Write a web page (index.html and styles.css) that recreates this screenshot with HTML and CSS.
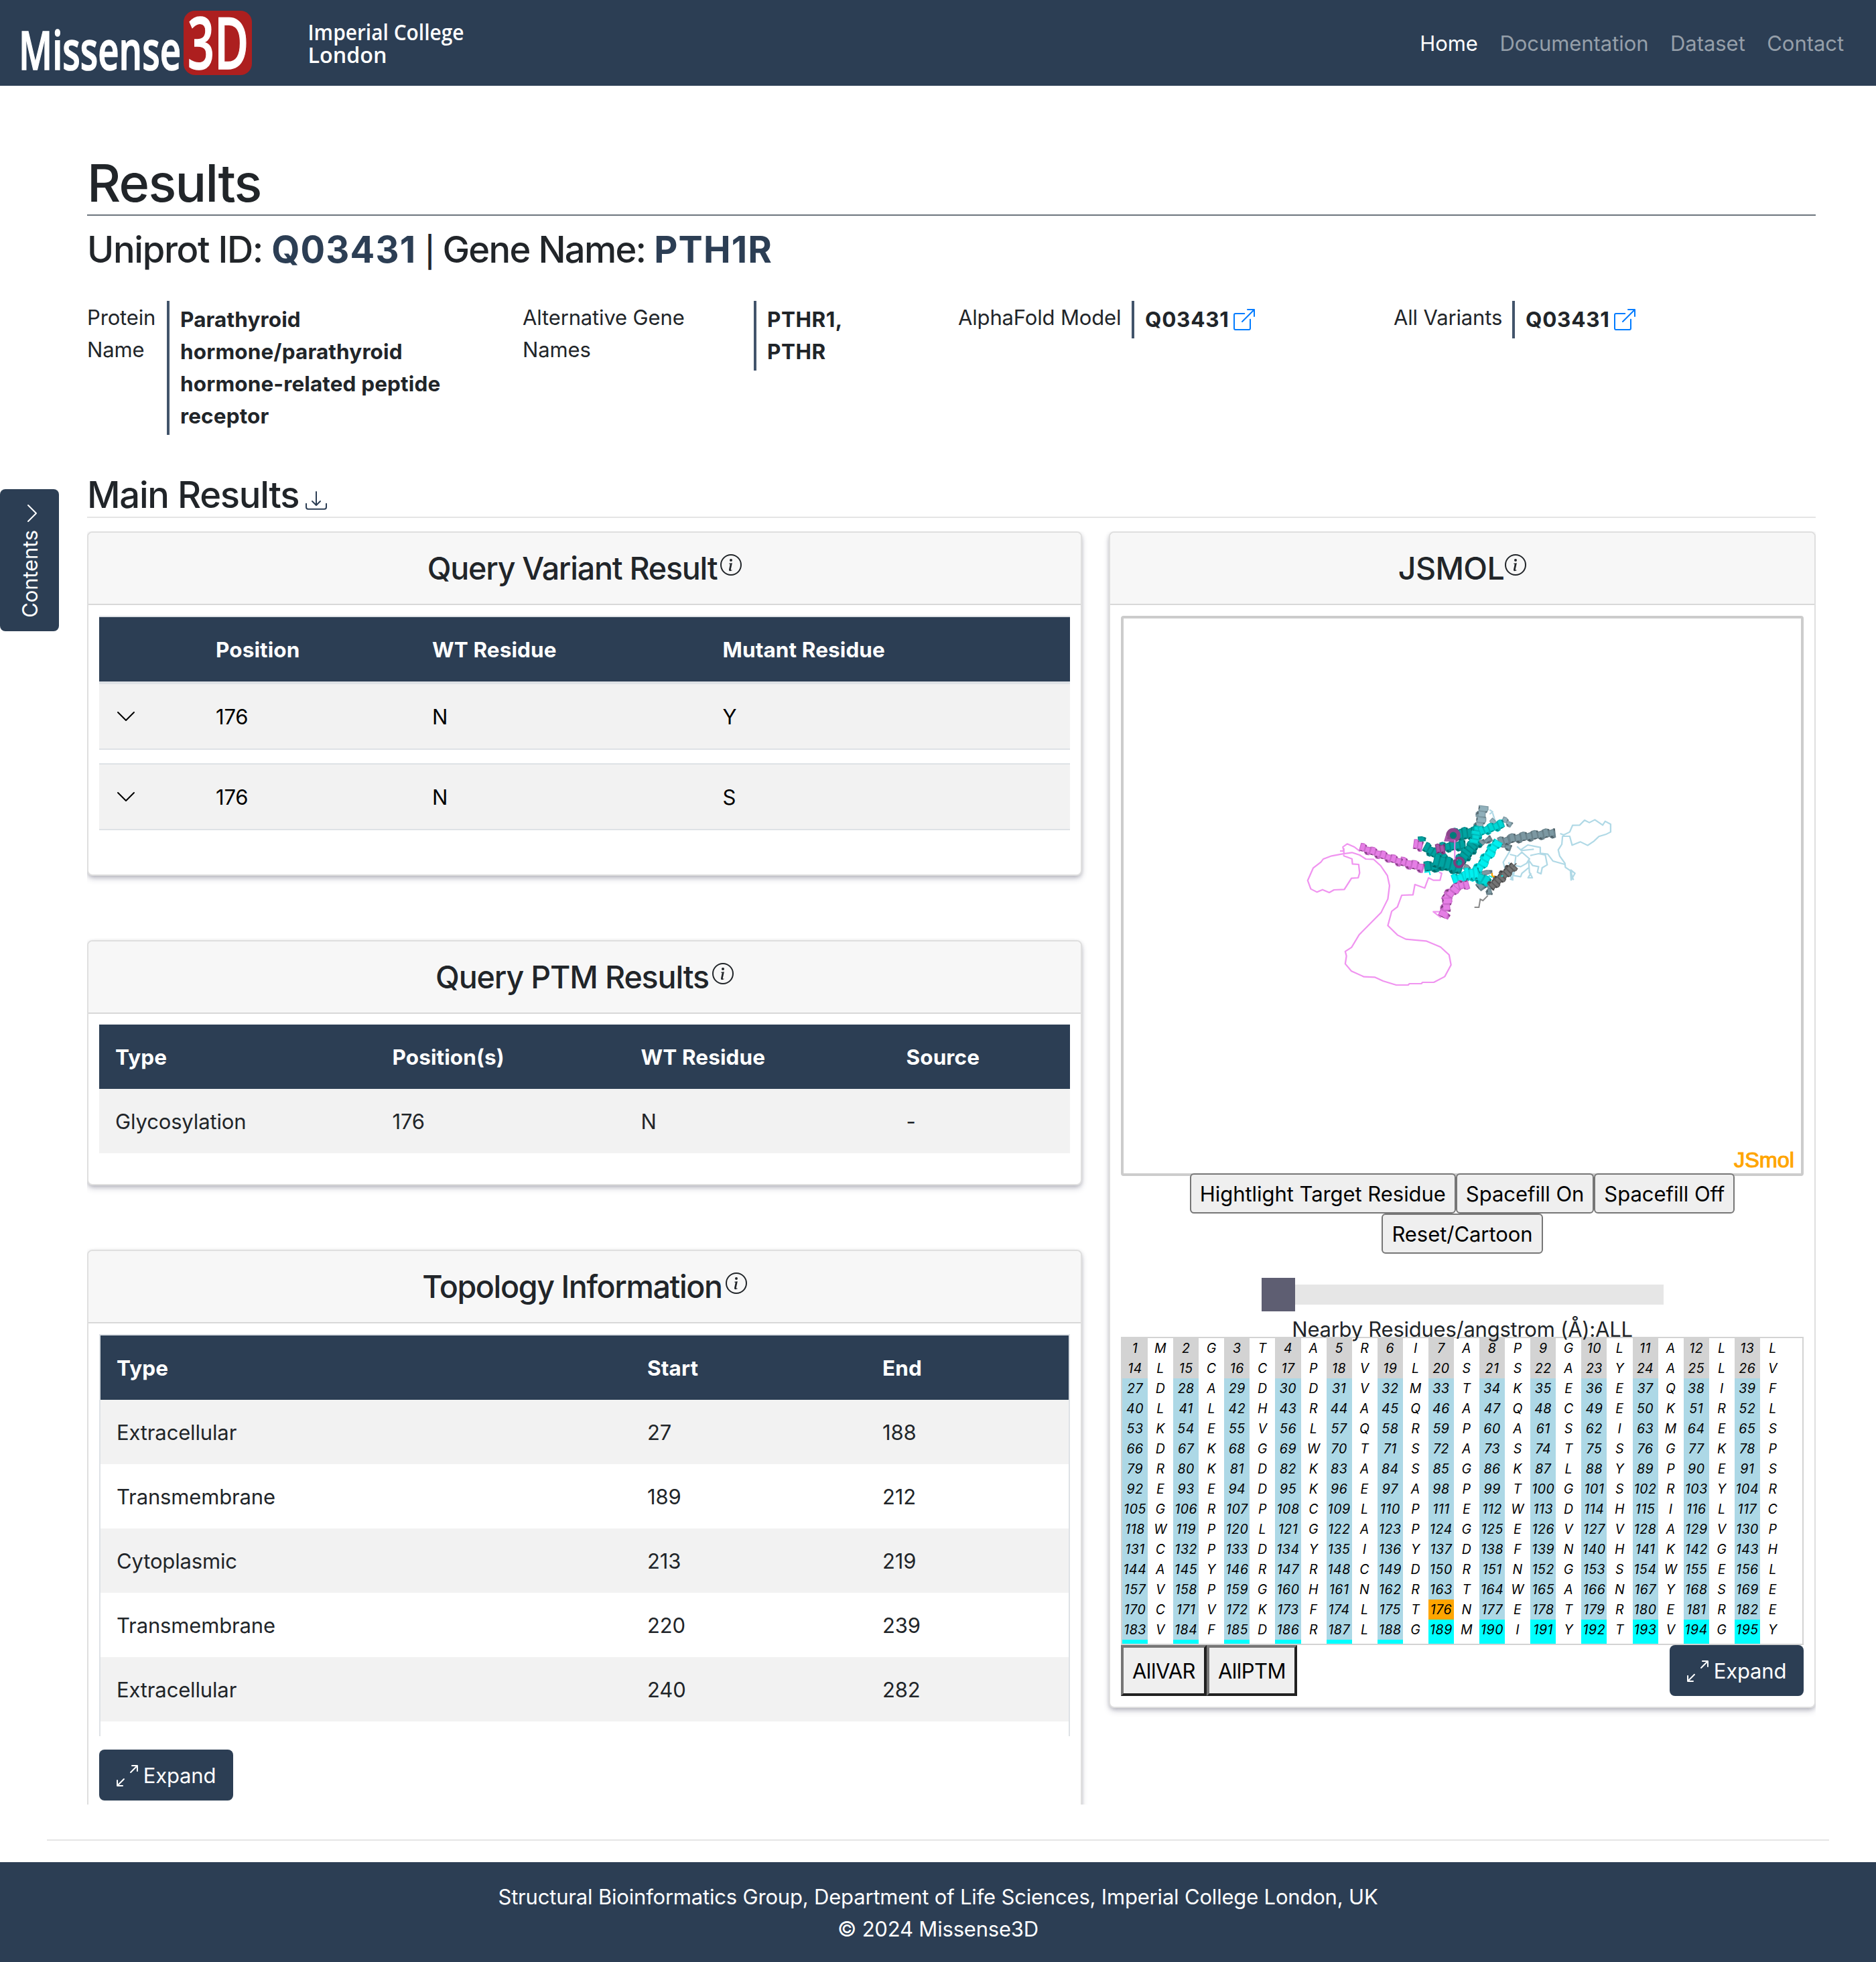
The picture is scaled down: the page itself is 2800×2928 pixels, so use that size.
FILE: index.html
```
<!DOCTYPE html>
<html lang="en">
<head>
<meta charset="utf-8">
<title>Missense3D - Results</title>
<link rel="stylesheet" href="styles.css">
</head>
<body>
<svg class="sprite" aria-hidden="true">
  <symbol id="i-info" viewBox="0 0 16 16"><path d="M8 15A7 7 0 1 1 8 1a7 7 0 0 1 0 14zm0 1A8 8 0 1 0 8 0a8 8 0 0 0 0 16z"/><path d="m8.93 6.588-2.29.287-.082.38.45.083c.294.07.352.176.288.469l-.738 3.468c-.194.897.105 1.319.808 1.319.545 0 1.178-.252 1.465-.598l.088-.416c-.2.176-.492.246-.686.246-.275 0-.375-.193-.304-.533L8.93 6.588zM9 4.5a1 1 0 1 1-2 0 1 1 0 0 1 2 0z"/></symbol>
  <symbol id="i-down" viewBox="0 0 16 16"><path d="M1.646 4.646a.5.5 0 0 1 .708 0L8 10.293l5.646-5.647a.5.5 0 0 1 .708.708l-6 6a.5.5 0 0 1-.708 0l-6-6a.5.5 0 0 1 0-.708z"/></symbol>
  <symbol id="i-right" viewBox="0 0 16 16"><path d="M4.646 1.646a.5.5 0 0 1 .708 0l6 6a.5.5 0 0 1 0 .708l-6 6a.5.5 0 0 1-.708-.708L10.293 8 4.646 2.354a.5.5 0 0 1 0-.708z"/></symbol>
  <symbol id="i-download" viewBox="0 0 16 16"><path d="M.5 9.9a.5.5 0 0 1 .5.5v2.5a1 1 0 0 0 1 1h12a1 1 0 0 0 1-1v-2.5a.5.5 0 0 1 1 0v2.5a2 2 0 0 1-2 2H2a2 2 0 0 1-2-2v-2.5a.5.5 0 0 1 .5-.5z"/><path d="M7.646 11.854a.5.5 0 0 0 .708 0l3-3a.5.5 0 0 0-.708-.708L8.5 10.293V1.5a.5.5 0 0 0-1 0v8.793L5.354 8.146a.5.5 0 1 0-.708.708l3 3z"/></symbol>
  <symbol id="i-link" viewBox="0 0 16 16"><path d="M8.636 3.5a.5.5 0 0 0-.5-.5H1.5A1.5 1.5 0 0 0 0 4.5v10A1.5 1.5 0 0 0 1.5 16h10a1.5 1.5 0 0 0 1.5-1.5V7.864a.5.5 0 0 0-1 0V14.5a.5.5 0 0 1-.5.5h-10a.5.5 0 0 1-.5-.5v-10a.5.5 0 0 1 .5-.5h6.636a.5.5 0 0 0 .5-.5z"/><path d="M16 .5a.5.5 0 0 0-.5-.5h-5a.5.5 0 0 0 0 1h3.793L6.146 9.146a.5.5 0 1 0 .708.708L15 1.707V5.5a.5.5 0 0 0 1 0v-5z"/></symbol>
  <symbol id="i-expand" viewBox="0 0 16 16"><path d="M5.828 10.172a.5.5 0 0 0-.707 0l-4.096 4.096V11.5a.5.5 0 0 0-1 0v3.975a.5.5 0 0 0 .5.5H4.5a.5.5 0 0 0 0-1H1.732l4.096-4.096a.5.5 0 0 0 0-.707zm4.344-4.344a.5.5 0 0 0 .707 0l4.096-4.096V4.5a.5.5 0 1 0 1 0V.525a.5.5 0 0 0-.5-.5H11.5a.5.5 0 0 0 0 1h2.768l-4.096 4.096a.5.5 0 0 0 0 .707z"/></symbol>
</svg>

<header class="navbar">
  <svg class="logo" viewBox="0 0 800 128">
    <rect x="274" y="16" width="102" height="96" rx="17" fill="#ad1f1f"/>
    <text class="logo-text thick" x="28" y="104" font-size="80" textLength="242" lengthAdjust="spacingAndGlyphs">Missense</text>
    <text class="logo-text thick" x="280" y="103" font-size="107" textLength="91" lengthAdjust="spacingAndGlyphs">3D</text>
    <text class="college" x="459.500" y="59.500" font-size="33" textLength="233" lengthAdjust="spacingAndGlyphs">Imperial College</text>
    <text class="college" x="459.500" y="94" font-size="33" textLength="118" lengthAdjust="spacingAndGlyphs">London</text>
  </svg>
  <nav class="links"><a class="active">Home</a><a>Documentation</a><a>Dataset</a><a>Contact</a></nav>
</header>

<aside class="contents-tab"><svg class="icon"><use href="#i-right"/></svg><span>Contents</span></aside>

<main class="page">
  <h1>Results</h1>
  <h2 class="ids">Uniprot ID: <b>Q03431</b><span class="pipe">|</span><span class="gene-label">Gene Name: </span><b>PTH1R</b></h2>

  <section class="facts">
    <div class="fact"><span class="label l1">Protein<br>Name</span><b>Parathyroid<br>hormone/parathyroid<br>hormone-related peptide<br>receptor</b></div>
    <div class="fact"><span class="label l2">Alternative Gene<br>Names</span><b class="alt">PTHR1,<br>PTHR</b></div>
    <div class="fact"><span class="label l3">AlphaFold Model</span><b class="acc">Q03431<svg class="icon blue"><use href="#i-link"/></svg></b></div>
    <div class="fact"><span class="label l4">All Variants</span><b class="acc">Q03431<svg class="icon blue"><use href="#i-link"/></svg></b></div>
  </section>

  <h2 class="main-title">Main Results<svg class="icon"><use href="#i-download"/></svg></h2>

  <div class="columns">
    <div class="left">
      <section class="card">
        <h4><span>Query Variant Result</span><svg class="icon"><use href="#i-info"/></svg></h4>
        <div class="body variants">
          <div class="tr head"><span></span><span>Position</span><span>WT Residue</span><span>Mutant Residue</span></div>
          <div class="tr first"><span><svg class="chev"><use href="#i-down"/></svg></span><span>176</span><span>N</span><span>Y</span></div>
          <div class="tr second"><span><svg class="chev"><use href="#i-down"/></svg></span><span>176</span><span>N</span><span>S</span></div>
        </div>
      </section>
      <section class="card">
        <h4 class="ptm-title"><span>Query PTM Results</span><svg class="icon"><use href="#i-info"/></svg></h4>
        <div class="body ptm">
          <div class="tr head"><span>Type</span><span>Position(s)</span><span>WT Residue</span><span>Source</span></div>
          <div class="tr odd"><span>Glycosylation</span><span>176</span><span>N</span><span>-</span></div>
        </div>
      </section>
      <section class="card topo-card">
        <h4 class="topo-title"><span>Topology Information</span><svg class="icon"><use href="#i-info"/></svg></h4>
        <div class="body">
          <div class="topo">
            <div class="tr head"><span>Type</span><span>Start</span><span>End</span></div>
            <div class="tr odd"><span>Extracellular</span><span>27</span><span>188</span></div>
            <div class="tr"><span>Transmembrane</span><span>189</span><span>212</span></div>
            <div class="tr odd"><span>Cytoplasmic</span><span>213</span><span>219</span></div>
            <div class="tr"><span>Transmembrane</span><span>220</span><span>239</span></div>
            <div class="tr odd"><span>Extracellular</span><span>240</span><span>282</span></div>
          </div>
          <button class="expand"><svg class="icon"><use href="#i-expand"/></svg>Expand</button>
        </div>
      </section>
    </div>

    <section class="card jsmol">
      <h4><span>JSMOL</span><svg class="icon"><use href="#i-info"/></svg></h4>
      <div class="body">
        <div class="viewer">
          <svg class="molecule" viewBox="0 0 1011 828">
            <g id="loops" class="loops" transform="translate(223 237) scale(.35714 .33333)">
              <g stroke="#f094f0">
                <path d="M364 332L340 312L310 298L292 312L296 330L280 330M296 318L296 352L330 365L332 388L358 390L362 428L356 450L328 452L298 502L255 504L235 516L207 503L184 514L158 500L145 462L168 406L200 380L210 366L245 352L290 343L330 337L362 348L388 366L420 367L450 396L478 440L487 485L480 545L452 605L360 705L328 762L302 780L307 800L302 835L328 868L380 893L425 895L460 912L515 930L565 930L570 924L620 924L625 918L672 918L718 892L744 840L736 795L700 760L640 733L555 725L520 706L480 664L496 600L520 580L538 528L585 526L593 480L634 496L650 450L670 461L698 461L705 430L694 425"/>
                <path d="M697 602H670L702 628"/>
              </g>
              <g stroke="#b0d9e6">
                <path d="M1200 252L1215 258L1240 245L1252 215L1282 214L1302 192L1322 203L1345 190L1378 214L1388 197L1411 210V245L1390 256L1362 265L1340 287L1315 305L1285 289L1250 304L1240 264H1210L1207 300L1192 325L1198 352L1220 385L1222 403L1243 418L1246 460L1262 430L1245 415L1250 445L1256 460"/>
                <path d="M1020 310L1035 325L1065 303L1117 314V340L1148 344L1170 375L1220 390"/>
                <path d="M990 330L962 380L970 410L1000 455M1035 328L1090 322M990 345L1015 352L1010 395L1035 400L1060 385L1072 365L1040 335L1020 355M1075 350L1110 342L1138 348L1146 392L1125 405L1120 432L1105 425L1110 400L1085 395L1068 370L1072 430M1010 405L1005 440L1035 445L1040 430L1068 405M1072 425L1084 450H1066L1078 428M985 380L1000 420L1002 460L990 455M905 145L918 155L905 165M918 160L928 195"/>
              </g>
            </g>
            <g id="helices" transform="translate(413 267) scale(.33333)"></g>
            <text class="brand" x="911" y="819" textLength="90" lengthAdjust="spacingAndGlyphs">JSmol</text>
          </svg>
        </div>
        <div class="controls">
          <button>Hightlight Target Residue</button><button>Spacefill On</button><button>Spacefill Off</button>
          <button>Reset/Cartoon</button>
        </div>
        <div class="slider"><i></i></div>
        <p class="nearby">Nearby Residues/angstrom (Å):ALL</p>
        <div class="seq" id="seq"></div>
        <div class="actions"><div class="outset"><button>AllVAR</button><button>AllPTM</button></div><button class="expand"><svg class="icon"><use href="#i-expand"/></svg>Expand</button></div>
      </div>
    </section>
  </div>
</main>
<hr class="rule">
<footer><p>Structural Bioinformatics Group, Department of Life Sciences, Imperial College London, UK</p><p>© 2024 Missense3D</p></footer>
<script src="script.js"></script>
</body>
</html>
```
FILE: script.js
```
// Residue grid: position number followed by its one-letter residue
const rows = ["MGTARIAPGLALL","LCCPVLSSAYALV","DADDVMTKEEQIF","LLHRAQAQCEKRL","KEVLQRPASIMES","DKGWTSASTSGKP","RKDKASGKLYPES","EEDKEAPTGSRYR","GRPCLPEWDHILC","WPLGAPGEVVAVP","CPDYIYDFNHKGH","AYRRCDRNGSWEL","VPGHNRTWANYSE","CVKFLTNETRERE","VFDRLGMIYTVGY"];
let n = 0, html = "";
const kind = i => i === 176 ? "target" : i < 27 ? "signal" : i < 189 ? "outer" : "membrane";
for (const row of rows) {
  for (const aa of row) { n++; html += `<span class="${kind(n)}">${n}</span><span>${aa}</span>`; }
  html += "<span></span>";
}
for (let i = 0; i < 13; i++) html += '<span class="membrane"></span><span></span>';
document.getElementById("seq").innerHTML = html + "<span></span>";

// Cartoon helices: a ribbon of turned segments, each with a lit face and a shaded edge
const palette = {
  violet: ["#e57ee5", "#cc6acc", "#7d3f7d"], plum: ["#a855a8", "#8a448a", "#63306a"],
  cyan: ["#00f0f0", "#00d8d8", "#009595"], aqua: ["#00d8d6", "#00bcbc", "#008a8a"], teal: ["#00a3a1", "#008c8b", "#006968"],
  steel: ["#91b0bb", "#7d99a3", "#56686f"], slate: ["#7c98a2", "#6b838c", "#4b5b62"], gray: ["#747474", "#5a5a5a", "#404040"]
};
// x1, y1, x2, y2, width, segments, colour
const helices = [
  [372, 38, 352, 140, 46, 4, "steel"], [458, 97, 498, 122, 26, 2, "steel"], [405, 100, 425, 125, 24, 1, "steel"],
  [448, 210, 495, 225, 28, 2, "slate"], [350, 380, 372, 410, 42, 1, "slate"], [398, 385, 402, 434, 28, 2, "slate"],
  [440, 200, 510, 184, 40, 3, "slate"], [490, 186, 692, 157, 42, 8, "slate"],
  [350, 215, 405, 180, 28, 2, "slate"], [285, 310, 330, 338, 28, 2, "slate"], [365, 342, 410, 335, 22, 1, "slate"],
  [235, 168, 345, 158, 56, 5, "teal"], [180, 225, 290, 212, 44, 5, "teal"],
  [80, 188, 112, 190, 24, 1, "teal"], [108, 220, 200, 280, 46, 5, "teal"], [108, 312, 200, 305, 48, 3, "teal"], [150, 282, 276, 318, 64, 5, "teal"],
  [268, 285, 345, 195, 56, 6, "teal"], [332, 205, 350, 130, 46, 4, "aqua"],
  [355, 155, 462, 118, 42, 5, "aqua"],
  [438, 195, 330, 350, 46, 7, "cyan"], [235, 372, 330, 345, 50, 4, "cyan"], [320, 335, 395, 385, 48, 3, "aqua"], [290, 345, 350, 340, 56, 3, "cyan"],
  [0, 286, 104, 316, 42, 4, "violet"], [-180, 222, 4, 290, 38, 8, "violet"],
  [60, 210, 98, 218, 46, 2, "violet"], [160, 232, 198, 228, 44, 2, "plum"],
  [306, 388, 240, 402, 42, 3, "violet"], [250, 402, 196, 462, 46, 3, "violet"], [208, 450, 205, 508, 46, 2, "violet"], [175, 515, 216, 538, 32, 1, "violet"],
  [510, 305, 405, 402, 44, 8, "gray"]
];
const f = v => v.toFixed(1);
let art = "";
for (const [x1, y1, x2, y2, w, k, c] of helices) {
  const len = Math.hypot(x2 - x1, y2 - y1), ux = (x2 - x1) / len, uy = (y2 - y1) / len, s = len / k, p = palette[c];
  const pt = (t, o) => `${f(x1 + ux * t - uy * o)},${f(y1 + uy * t + ux * o)}`;
  for (let i = 0; i < k; i++) {
    const a = i * s, h = w / 2, j = i % 2 ? 5 : -3;
    art += `<polygon fill="${p[1]}" points="${pt(a - 3, -h + 3 + j)} ${pt(a + s * .5, -h + j)} ${pt(a + s + 3, -h + 2)} ${pt(a + s + 2, h - 3 + j)} ${pt(a + s * .4, h + j)} ${pt(a, h - 3)}"/>`;
    art += `<polygon fill="${p[0]}" points="${pt(a + 2, -h + 6 + j)} ${pt(a + s * .75, -h + 3 + j)} ${pt(a + s * .85, h * .5)} ${pt(a + 3, h * .7)}"/>`;
    art += `<polygon fill="${p[2]}" points="${pt(a + s * .75, -h + 1)} ${pt(a + s + 3, -h + 5)} ${pt(a + s + 1, -h * .2)}"/>`;
    art += `<polygon fill="${p[2]}" points="${pt(a + 1, h - 3)} ${pt(a + s * .8, h - 1 + j)} ${pt(a + s * .4, h * .55)}"/>`;
  }
}
// End-on helices appear as rings
art += '<circle cx="237" cy="170" r="24" fill="#007c7a" stroke="#8c458c" stroke-width="17"/><path d="M208 172L202 192H240" fill="none" stroke="#a855a8" stroke-width="10"/><circle cx="263" cy="291" r="20" fill="none" stroke="#7d3f7d" stroke-width="12"/><path d="M244 190V278" stroke="#e67ee6" stroke-width="6"/>';
art += '<path d="M392 440L370 462L358 456L352 492H332" fill="none" stroke="#8a8a8a" stroke-width="6"/>';
art += '<path d="M411 338V354H422" fill="none" stroke="orange" stroke-width="7"/><path d="M396 350L412 358M452 352H460M108 335L130 332L134 348" fill="none" stroke="#0ee" stroke-width="6"/>';
art += '<path d="M505 310L520 295M500 330L514 326" stroke="#5e5e5e" stroke-width="5"/>';
document.getElementById("helices").innerHTML = art;
```
FILE: styles.css
```
* { box-sizing: border-box; }
body { margin: 0; background: #fff; color: #212529; font: 400 31px/48px Inter, "Liberation Sans", sans-serif; letter-spacing: -.15px; height: 2928px; overflow: hidden; display: flex; flex-direction: column; position: relative; }
h1, h2, h4, p { margin: 0; font-weight: 500; }
p { font-weight: 400; }
b { font-weight: 700; }
button { font: inherit; letter-spacing: inherit; margin: 0; }
.sprite { position: absolute; width: 0; height: 0; }
.icon { width: 32px; height: 32px; fill: currentColor; flex: none; }
.blue { color: #007bff; }

.navbar { height: 128px; flex: none; background: #2c3e54; display: flex; justify-content: space-between; align-items: center; padding-right: 48px; }
.logo { width: 800px; height: 128px; }
.logo-text { font-family: "Open Sans", sans-serif; font-weight: 600; fill: #fff; letter-spacing: 0; }
.thick { stroke: #fff; stroke-width: 1.6; }
.college { font-family: "Open Sans", sans-serif; font-weight: 600; fill: #fff; letter-spacing: 0; }
.links { display: flex; gap: 32.5px; color: #959fa9; letter-spacing: -.05px; padding-top: 2px; }
.links .active { color: #fff; }

.contents-tab { position: absolute; left: 0; top: 730px; width: 88px; height: 212px; background: #2c3e54; color: #fff; border-radius: 8px; display: flex; flex-direction: column; align-items: center; padding: 20px 0 0 8px; gap: 9px; }
.contents-tab span { writing-mode: vertical-rl; transform: rotate(180deg); margin-right: 6px; }

.page { padding: 98px 90px 0 130px; flex: none; height: 2565px; }
h1 { font-size: 77.6px; line-height: 94px; letter-spacing: -1.7px; border-bottom: 2px solid #6c757d; }
h2 { font-size: 54.3px; line-height: 67px; letter-spacing: -1.2px; }
.ids { margin-top: 17px; white-space: pre; letter-spacing: -1.3px; height: 67px; }
.ids b { color: #2c3e54; letter-spacing: 1.2px; }
.pipe { font-size: 45px; display: inline-block; width: 39px; text-align: center; line-height: 60px; }
.gene-label { letter-spacing: -1.7px; }
.facts { margin-top: 43px; display: grid; grid-template-columns: repeat(4, 650px); height: 200px; align-items: start; }
.fact { display: flex; align-items: flex-start; }
.label { flex: none; padding-top: 1px; }
.l1 { width: 119px; } .l2 { width: 345px; } .l3 { width: 259px; } .l4 { width: 177px; }
.fact b { border-left: 4px solid #42546b; padding: 4px 0 4px 16px; font-size: 31.5px; letter-spacing: .13px; }
.fact .alt { letter-spacing: .5px; }
.fact .acc { display: flex; align-items: center; letter-spacing: .7px; gap: 7px; height: 56px; }
.main-title { margin-top: 55px; display: flex; gap: 10px; border-bottom: 2px solid #e5e5e5; height: 69px; line-height: 69px; letter-spacing: -1.25px; }
.main-title .icon { color: #2c3e54; margin-top: 27px; }

.columns { margin-top: 20px; height: 1900px; overflow: hidden; display: grid; grid-template-columns: 1485px 1055px; gap: 40px; align-items: start; }
.left { display: flex; flex-direction: column; gap: 96px; }
.card { border: 2px solid #dfdfdf; border-radius: 8px; background: #fff; box-shadow: 0 5px 10px -1px rgba(50, 50, 93, .25), 0 2px 6px -1px rgba(0, 0, 0, .2); }
.card h4 { height: 108px; background: #f7f7f7; border-bottom: 2px solid #d8d8d8; border-radius: 6px 6px 0 0; display: flex; justify-content: center; align-items: center; font-size: 46.6px; letter-spacing: -1.25px; gap: 5px; }
.card h4.ptm-title { letter-spacing: -1.15px; }
.card h4.topo-title { letter-spacing: -1.4px; }
.card h4 .icon { margin-bottom: 11px; }
.body { padding: 16px; }
.tr { display: grid; height: 96px; align-items: center; padding-top: 1px; }
.tr span { padding-left: 24px; }
.head { background: #2c3e54; color: #fff; font-weight: 700; font-size: 31.5px; letter-spacing: .1px; }
.odd { background: #f2f2f2; }
.variants { padding-bottom: 66px; }
.variants .tr { grid-template-columns: 150px 323px 433.5px 1fr; }
.variants .head { height: 102px; border-top: 2px solid #dee2e6; border-bottom: 4px solid #dee2e6; }
.variants .first, .variants .second { background: #f2f2f2; color: #000; }
.variants .first { border-bottom: 2px solid #dee2e6; height: 98px; }
.variants .second { border: solid #dee2e6; border-width: 2px 0; height: 100px; margin-top: 20px; }
.chev { width: 32px; height: 32px; display: block; margin-bottom: 1px; }
.ptm { padding-bottom: 46px; }
.ptm .tr { grid-template-columns: 413.5px 371px 396px 1fr; }
.topo { height: 600px; border: 2px solid #dee2e6; border-bottom: 0; overflow: hidden; margin-bottom: 20px; }
.topo .tr { grid-template-columns: 792px 351px 1fr; }
.expand { width: 200px; height: 76px; border: 0; border-radius: 8px; background: #2c3e54; color: #fff; display: flex; align-items: center; justify-content: center; gap: 8px; padding: 1px 0 0; }
.topo-card { height: 900px; }

.jsmol h4 { letter-spacing: -.6px; gap: 1px; }
.viewer { height: 836px; border: 4px solid #ccc; border-radius: 4px; }
.molecule { display: block; width: 1011px; height: 828px; }
.loops { fill: none; stroke-width: 6.4; stroke-linejoin: round; }
.brand { font: 32px "Liberation Sans", sans-serif; fill: #ffa500; stroke: #ffa500; stroke-width: 1.1; letter-spacing: 0; }
.controls { margin-top: -4px; display: flex; flex-wrap: wrap; justify-content: center; padding: 0 80px; position: relative; }
.controls button { height: 60px; border: 2px solid #767676; border-radius: 6px; background: #efefef; color: #000; padding: 1px 13px 0; letter-spacing: -.05px; }
.slider { width: 600px; height: 30px; background: #e6e6e6; margin: 46px auto 13px; display: flex; align-items: center; }
.slider i { width: 50px; height: 50px; background: #5e5e72; }
.nearby { text-align: center; letter-spacing: -.25px; margin-bottom: -13px; position: relative; z-index: 1; }
.seq { height: 460px; border: 2px solid #d3d3d3; overflow: hidden; display: grid; grid-template-columns: repeat(26, 38.08px) 1fr; grid-auto-rows: 30px; font-size: 19.5px; line-height: 30px; font-style: italic; letter-spacing: .6px; color: #000; text-align: center; }
.signal { background: #d3d3d3; }
.outer { background: #add8e6; }
.target { background: #ffa500; }
.membrane { background: #0ff; }
.actions { display: flex; justify-content: space-between; }
.outset { display: flex; }
.outset button { height: 76px; border: 4px solid; border-color: #767676 #212121 #212121 #767676; background: #efefef; color: #000; padding: 1px 0 0; width: 128px; letter-spacing: -.5px; }
.outset button + button { width: 135px; }

.rule { width: 2660px; margin: 52px auto 0; border: 0; height: 2px; background: #e5e5e5; flex: none; }
footer { margin-top: 32px; flex: 1; background: #2c3e54; color: #fff; text-align: center; padding-top: 28px; }
footer p { letter-spacing: -.19px; }
```
